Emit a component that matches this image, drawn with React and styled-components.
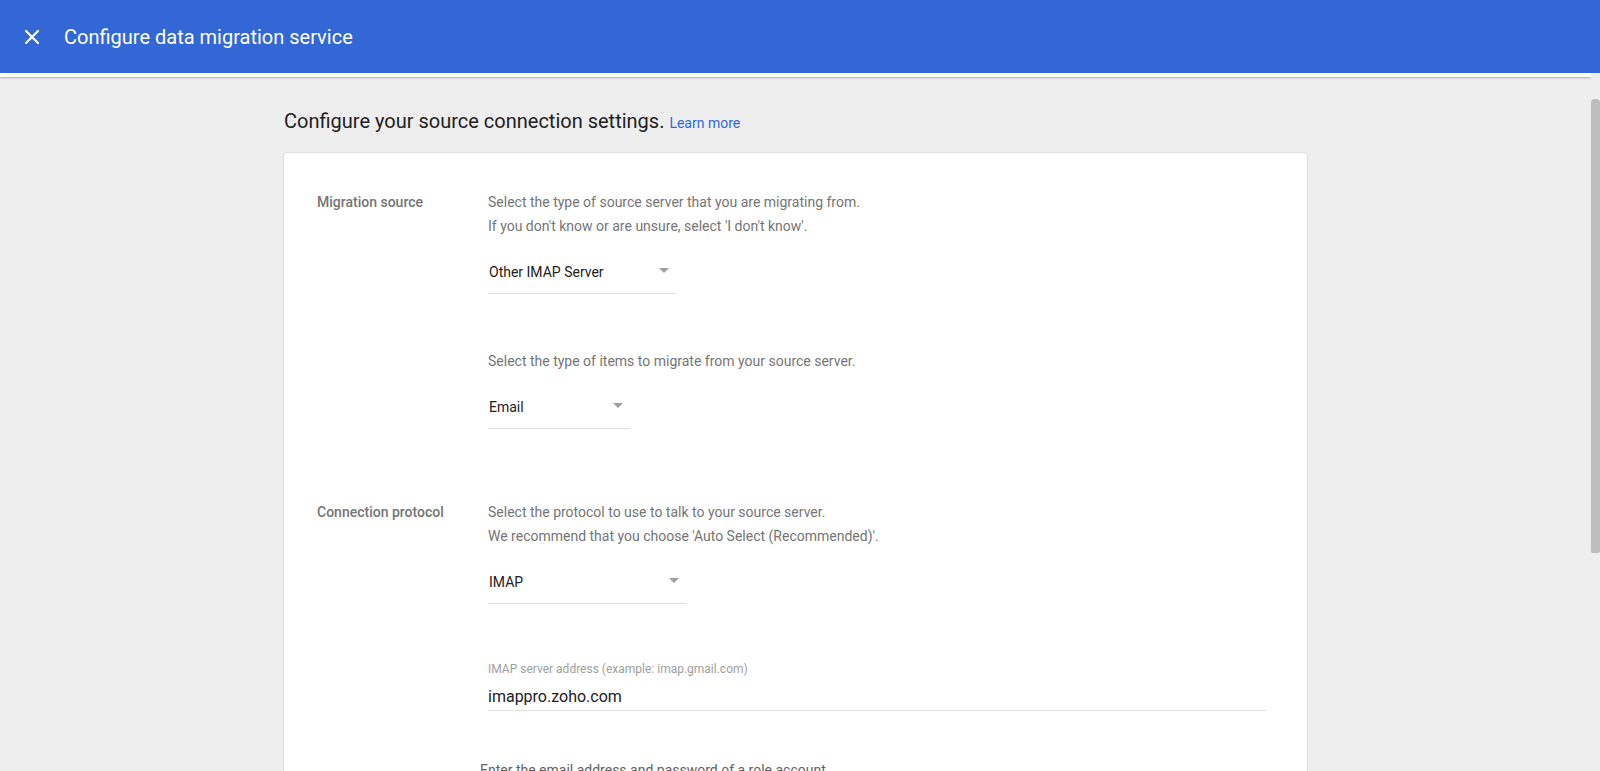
import styled, { createGlobalStyle } from "styled-components";

const GlobalStyle = createGlobalStyle`
  html, body, #root {
    height: 100%;
  }
  body {
    margin: 0;
    overflow: hidden;
    background: #eeeeee;
    font-family: Roboto, "Liberation Sans", Arial, sans-serif;
    color: #212121;
  }
`;

const Shell = styled.div`
  display: flex;
  flex-direction: column;
  height: 100vh;
`;

const TopBar = styled.header`
  height: 73px;
  flex-shrink: 0;
  display: flex;
  align-items: center;
  gap: 25px;
  padding-left: 25px;
  background: #3367d6;
  color: #fff;

  h2 {
    margin: 0;
    font-size: 20px;
    font-weight: 400;
    line-height: 28px;
  }
`;

const CloseButton = styled.button`
  display: flex;
  padding: 0;
  border: 0;
  background: none;
  cursor: pointer;
`;

const Body = styled.div`
  flex: 1;
  min-height: 0;
  display: flex;
`;

const Scroller = styled.main`
  flex: 1;
  min-width: 0;
  overflow-y: auto;
  scrollbar-width: none;

  &::-webkit-scrollbar {
    display: none;
  }
`;

const ScrollRail = styled.div`
  width: 9px;
  flex-shrink: 0;
  padding-top: 26px;
  background: #eeeeee;
`;

const ScrollThumb = styled.div`
  height: 454px;
  background: #bdbdbd;
  border-radius: 4px 4px 2px 2px;
`;

const BarEdge = styled.div`
  height: 4px;
  background: #fff;
  box-shadow: 0 1px 2px rgba(0, 0, 0, 0.28);
`;

const Page = styled.div`
  max-width: 1023px;
  margin: 0 auto;
  padding: 30px 0 40px;
`;

const Heading = styled.h1`
  margin: 0 0 16px;
  font-size: 20px;
  font-weight: 400;
  line-height: 28px;
  color: #212121;

  a {
    font-size: 14px;
    color: #3367d6;
    text-decoration: none;
  }
`;

const Card = styled.section`
  box-sizing: border-box;
  min-height: 917px;
  padding: 37px 41px 0 33px;
  background: #fff;
  border-radius: 3px;
  box-shadow: 0 0 0 1px rgba(0, 0, 0, 0.05), 0 1px 2px rgba(0, 0, 0, 0.08);
`;

const Section = styled.div`
  display: grid;
  grid-template-columns: 171px 1fr;
  padding-bottom: 71px;
`;

const Label = styled.div`
  font-size: 14px;
  font-weight: 500;
  line-height: 24px;
  color: #757575;
`;

const Group = styled.div`
  & + & {
    margin-top: 55px;
  }
`;

const Hint = styled.p`
  margin: 0;
  font-size: 14px;
  line-height: 24px;
  color: #757575;
`;

const Select = styled.div`
  box-sizing: border-box;
  width: ${(p) => p.$width}px;
  height: 44px;
  margin-top: 12px;
  padding: 0 7px 0 1px;
  display: flex;
  align-items: center;
  justify-content: space-between;
  border-bottom: 1px solid #e0e0e0;
  font-size: 14px;
  color: #212121;
`;

const Caret = styled.span`
  width: 0;
  height: 0;
  margin-bottom: 3px;
  border-left: 5px solid transparent;
  border-right: 5px solid transparent;
  border-top: 5px solid #9e9e9e;
`;

const TextField = styled.div`
  margin-top: 57px;

  label {
    display: block;
    font-size: 12px;
    line-height: 16px;
    color: #9e9e9e;
  }
`;

const Value = styled.div`
  margin-top: 8px;
  padding-bottom: 1px;
  font-size: 16px;
  line-height: 24px;
  color: #212121;
  border-bottom: 1px solid #e0e0e0;
`;

const Note = styled.p`
  margin: 47px 0 0 -8px;
  font-size: 14px;
  line-height: 24px;
  color: #616161;
`;

const Dropdown = ({ value, width }) => (
  <Select $width={width}>
    <span>{value}</span>
    <Caret />
  </Select>
);

const App = () => (
  <Shell>
    <GlobalStyle />
    <TopBar>
      <CloseButton aria-label="Close">
        <svg width="14" height="14" viewBox="0 0 14 14">
          <path
            d="M1 1L13 13M13 1L1 13"
            stroke="#fff"
            strokeWidth="2.2"
            strokeLinecap="square"
          />
        </svg>
      </CloseButton>
      <h2>Configure data migration service</h2>
    </TopBar>

    <Body>
      <Scroller>
        <BarEdge />
        <Page>
          <Heading>
            Configure your source connection settings. <a href="#">Learn more</a>
          </Heading>

          <Card>
            <Section>
              <Label>Migration source</Label>
              <div>
                <Group>
                  <Hint>
                    Select the type of source server that you are migrating from.
                    <br />
                    If you don't know or are unsure, select 'I don't know'.
                  </Hint>
                  <Dropdown value="Other IMAP Server" width={188} />
                </Group>
                <Group>
                  <Hint>
                    Select the type of items to migrate from your source server.
                  </Hint>
                  <Dropdown value="Email" width={142} />
                </Group>
              </div>
            </Section>

            <Section>
              <Label>Connection protocol</Label>
              <div>
                <Group>
                  <Hint>
                    Select the protocol to use to talk to your source server.
                    <br />
                    We recommend that you choose 'Auto Select (Recommended)'.
                  </Hint>
                  <Dropdown value="IMAP" width={198} />
                </Group>
                <TextField>
                  <label>IMAP server address (example: imap.gmail.com)</label>
                  <Value>imappro.zoho.com</Value>
                </TextField>
                <Note>Enter the email address and password of a role account.</Note>
              </div>
            </Section>
          </Card>
        </Page>
      </Scroller>
      <ScrollRail>
        <ScrollThumb />
      </ScrollRail>
    </Body>
  </Shell>
);

export default App;
